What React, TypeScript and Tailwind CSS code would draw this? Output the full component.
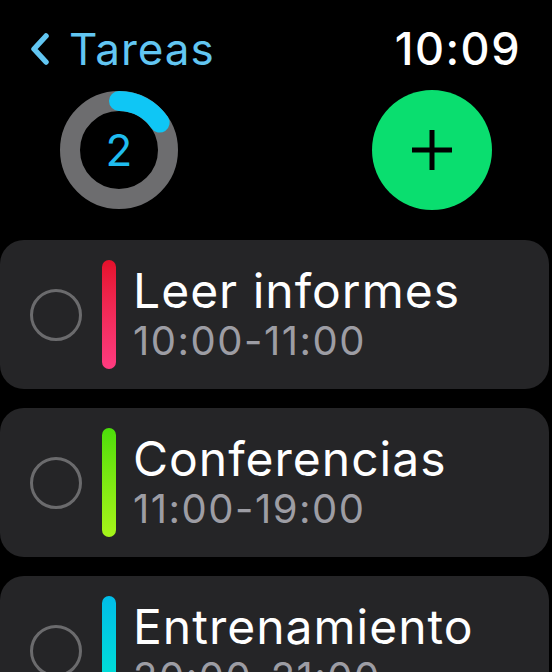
import React from 'react';

type Task = { id: string; title: string; time: string; bar: string };

const TASKS: Task[] = [
  { id: 'a', title: 'Leer informes', time: '10:00-11:00', bar: 'bg-gradient-to-b from-[#e5102a] to-[#ff3b80]' },
  { id: 'b', title: 'Conferencias', time: '11:00-19:00', bar: 'bg-gradient-to-b from-[#4bde0a] to-[#a6f51a]' },
  { id: 'c', title: 'Entrenamiento', time: '20:00-21:00', bar: 'bg-gradient-to-b from-[#00bde8] to-[#00e8d0]' },
];

function Ring() {
  // arc from 0deg (top) to ~56deg, radius 49 around (60,60)
  const r = 49;
  const a = (56 * Math.PI) / 180;
  const x = 60 + r * Math.sin(a);
  const y = 60 - r * Math.cos(a);
  return (
    <div className="relative h-[120px] w-[120px]">
      <svg width="120" height="120" viewBox="0 0 120 120" className="absolute inset-0">
        <circle cx="60" cy="60" r={r} fill="none" stroke="#6d6d6f" strokeWidth="20" />
        <path d={`M60 ${60 - r} A${r} ${r} 0 0 1 ${x} ${y}`} fill="none" stroke="#0fc6f5" strokeWidth="20" strokeLinecap="round" />
      </svg>
      <div className="absolute inset-0 flex items-center justify-center text-[44px] leading-none text-[#1fbcef]">2</div>
    </div>
  );
}

export default function App() {
  return (
    <div className="h-[672px] w-[552px] overflow-hidden bg-black font-['Inter','Noto_Sans',sans-serif]">
      <div className="flex items-center justify-between pl-[29px] pr-[31px] pt-[26px]">
        <div className="flex items-center gap-[18px] text-[#62c6f2]">
          <svg width="22" height="32" viewBox="0 0 22 32">
            <path d="M17 3 L5 16 L17 29" fill="none" stroke="#62c6f2" strokeWidth="5.5" strokeLinecap="round" strokeLinejoin="round" />
          </svg>
          <span className="text-[44px] leading-[46px] tracking-[1px]">Tareas</span>
        </div>
        <span className="text-[45px] font-medium leading-[46px] tracking-[1.5px] text-white">10:09</span>
      </div>

      <div className="mt-[18px] flex items-center justify-between pl-[59px] pr-[60px]">
        <Ring />
        <button className="flex h-[120px] w-[120px] items-center justify-center rounded-full bg-[#0ade6f]">
          <svg width="44" height="44" viewBox="0 0 44 44">
            <path d="M22 2 V42 M2 22 H42" stroke="#000" strokeWidth="5" />
          </svg>
        </button>
      </div>

      <div className="mt-[30px] flex flex-col gap-[19px]">
        {TASKS.map((t) => (
          <div key={t.id} className="flex h-[149px] w-[549px] shrink-0 items-center rounded-[24px] bg-[#252527] pl-[30px]">
            <div className="h-[52px] w-[52px] shrink-0 rounded-full border-[3px] border-[#6b6b6d]" />
            <div className={`ml-[20px] h-[109px] w-[14px] shrink-0 rounded-full ${t.bar}`} />
            <div className="ml-[17px] flex flex-col">
              <span className="text-[48px] leading-[52px] tracking-[1px] text-white">{t.title}</span>
              <span className="text-[40px] leading-[48px] tracking-[1.5px] text-[#9d9da4]">{t.time}</span>
            </div>
          </div>
        ))}
      </div>
    </div>
  );
}
